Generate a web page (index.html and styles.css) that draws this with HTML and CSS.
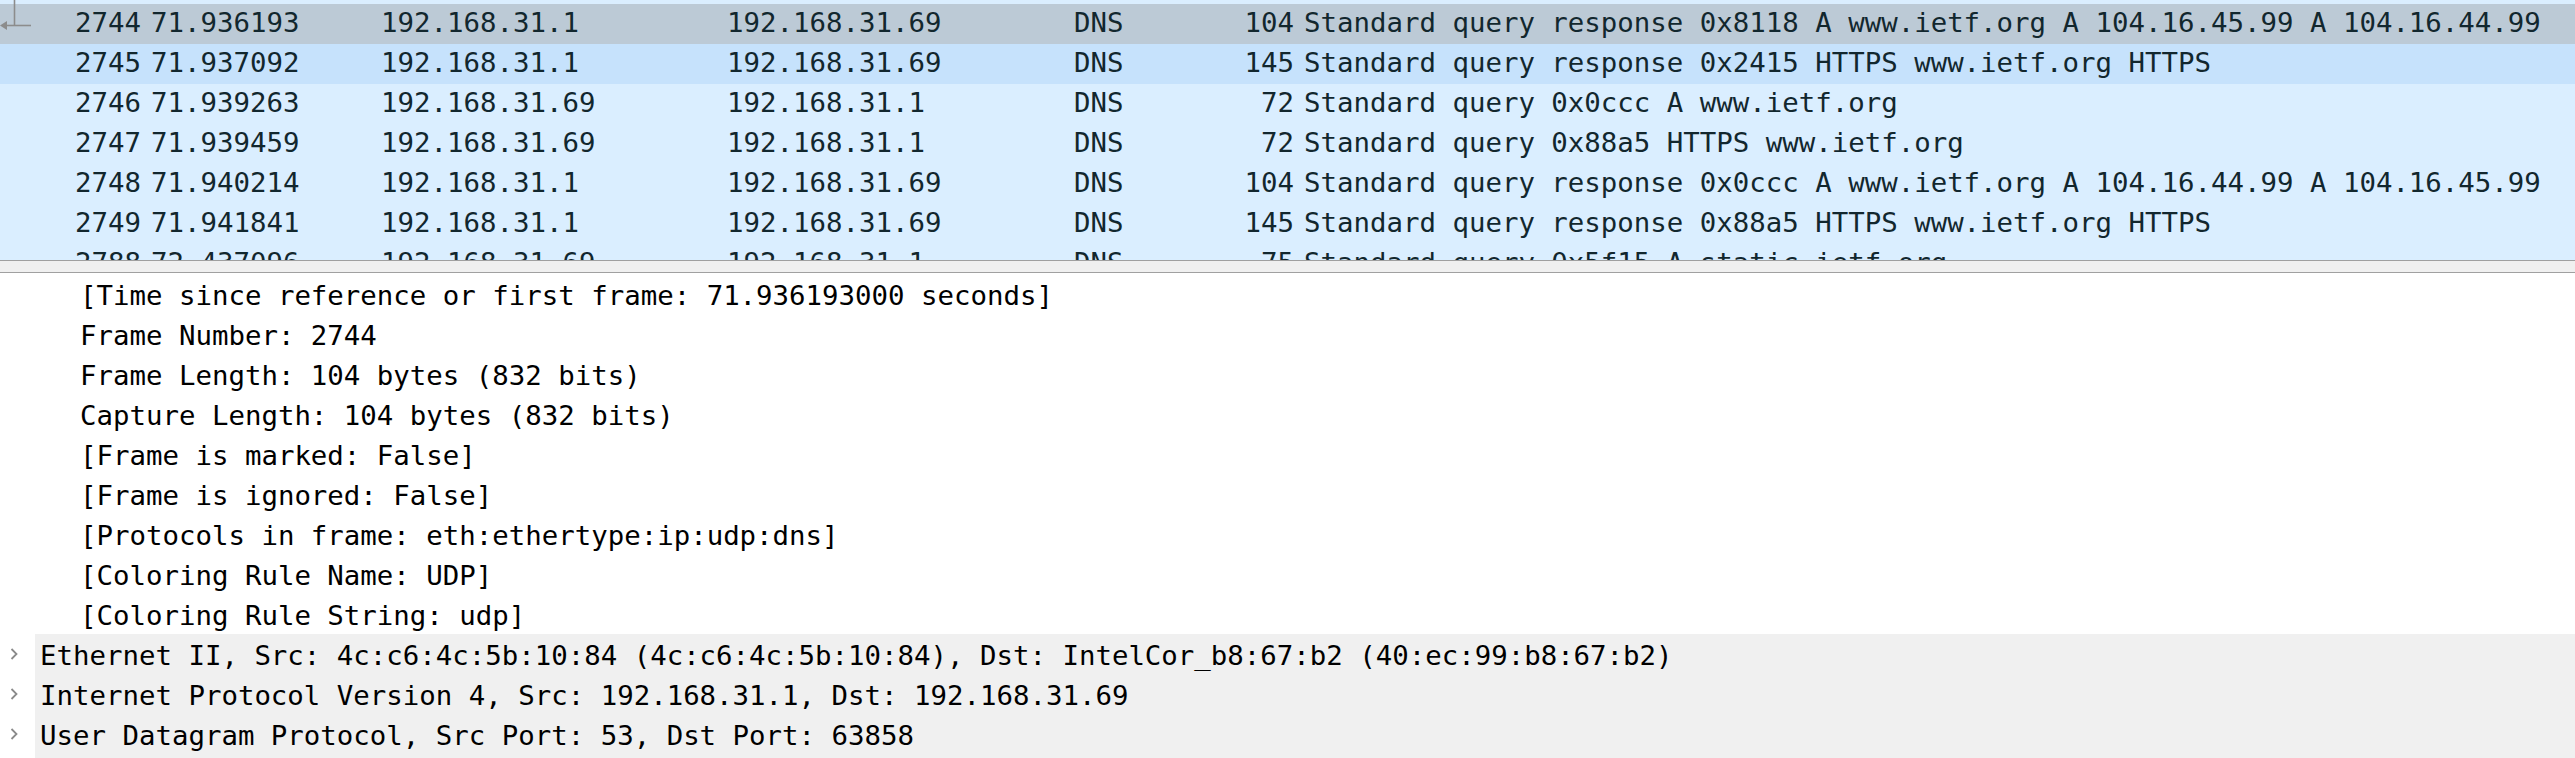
FILE: index.html
```html
<!DOCTYPE html>
<html>
<head>
<meta charset="utf-8">
<link rel="stylesheet" href="styles.css">
</head>
<body>
<div class="app">
  <div class="packet-list">
    <svg class="related" width="34" height="32" viewBox="0 0 34 32">
      <line x1="14.5" y1="0" x2="14.5" y2="25.5" stroke="#8c8c8c" stroke-width="1.6"/>
      <line x1="5" y1="25.5" x2="31" y2="25.5" stroke="#8c8c8c" stroke-width="1.6"/>
      <polygon points="0,25.5 7,21 7,30" fill="#8c8c8c"/>
    </svg>
    <div class="row selected"><span class="c-no">2744</span><span class="c-time">71.936193</span><span class="c-src">192.168.31.1</span><span class="c-dst">192.168.31.69</span><span class="c-proto">DNS</span><span class="c-len">104</span><span class="c-info">Standard query response 0x8118 A www.ietf.org A 104.16.45.99 A 104.16.44.99</span></div>
    <div class="row hover"><span class="c-no">2745</span><span class="c-time">71.937092</span><span class="c-src">192.168.31.1</span><span class="c-dst">192.168.31.69</span><span class="c-proto">DNS</span><span class="c-len">145</span><span class="c-info">Standard query response 0x2415 HTTPS www.ietf.org HTTPS</span></div>
    <div class="row"><span class="c-no">2746</span><span class="c-time">71.939263</span><span class="c-src">192.168.31.69</span><span class="c-dst">192.168.31.1</span><span class="c-proto">DNS</span><span class="c-len">72</span><span class="c-info">Standard query 0x0ccc A www.ietf.org</span></div>
    <div class="row"><span class="c-no">2747</span><span class="c-time">71.939459</span><span class="c-src">192.168.31.69</span><span class="c-dst">192.168.31.1</span><span class="c-proto">DNS</span><span class="c-len">72</span><span class="c-info">Standard query 0x88a5 HTTPS www.ietf.org</span></div>
    <div class="row"><span class="c-no">2748</span><span class="c-time">71.940214</span><span class="c-src">192.168.31.1</span><span class="c-dst">192.168.31.69</span><span class="c-proto">DNS</span><span class="c-len">104</span><span class="c-info">Standard query response 0x0ccc A www.ietf.org A 104.16.44.99 A 104.16.45.99</span></div>
    <div class="row"><span class="c-no">2749</span><span class="c-time">71.941841</span><span class="c-src">192.168.31.1</span><span class="c-dst">192.168.31.69</span><span class="c-proto">DNS</span><span class="c-len">145</span><span class="c-info">Standard query response 0x88a5 HTTPS www.ietf.org HTTPS</span></div>
    <div class="row"><span class="c-no">2788</span><span class="c-time">72.437096</span><span class="c-src">192.168.31.69</span><span class="c-dst">192.168.31.1</span><span class="c-proto">DNS</span><span class="c-len">75</span><span class="c-info">Standard query 0x5f15 A static.ietf.org</span></div>
  </div>
  <div class="splitter"></div>
  <div class="details">
    <div class="drow child">[Time since reference or first frame: 71.936193000 seconds]</div>
    <div class="drow child">Frame Number: 2744</div>
    <div class="drow child">Frame Length: 104 bytes (832 bits)</div>
    <div class="drow child">Capture Length: 104 bytes (832 bits)</div>
    <div class="drow child">[Frame is marked: False]</div>
    <div class="drow child">[Frame is ignored: False]</div>
    <div class="drow child">[Protocols in frame: eth:ethertype:ip:udp:dns]</div>
    <div class="drow child">[Coloring Rule Name: UDP]</div>
    <div class="drow child">[Coloring Rule String: udp]</div>
    <div class="drow top"><span class="twisty"><svg width="10" height="14" viewBox="0 0 10 14"><polyline points="2.5,2 7.5,7 2.5,12" fill="none" stroke="#8a8a8a" stroke-width="1.8"/></svg></span><span class="label">Ethernet II, Src: 4c:c6:4c:5b:10:84 (4c:c6:4c:5b:10:84), Dst: IntelCor_b8:67:b2 (40:ec:99:b8:67:b2)</span></div>
    <div class="drow top"><span class="twisty"><svg width="10" height="14" viewBox="0 0 10 14"><polyline points="2.5,2 7.5,7 2.5,12" fill="none" stroke="#8a8a8a" stroke-width="1.8"/></svg></span><span class="label">Internet Protocol Version 4, Src: 192.168.31.1, Dst: 192.168.31.69</span></div>
    <div class="drow top"><span class="twisty"><svg width="10" height="14" viewBox="0 0 10 14"><polyline points="2.5,2 7.5,7 2.5,12" fill="none" stroke="#8a8a8a" stroke-width="1.8"/></svg></span><span class="label">User Datagram Protocol, Src Port: 53, Dst Port: 63858</span></div>
    <div class="drow top"><span class="twisty"><svg width="10" height="14" viewBox="0 0 10 14"><polyline points="2.5,2 7.5,7 2.5,12" fill="none" stroke="#8a8a8a" stroke-width="1.8"/></svg></span><span class="label">Domain Name System (response)</span></div>
  </div>
</div>
</body>
</html>
```
FILE: styles.css
```css
html, body {
  margin: 0;
  padding: 0;
  background: #ffffff;
  overflow: hidden;
}

.app {
  width: 2575px;
  height: 758px;
  display: flex;
  flex-direction: column;
  font-family: "DejaVu Sans Mono", "Liberation Mono", monospace;
  font-size: 27.4px;
}

.packet-list {
  position: relative;
  height: 260px;
  flex: none;
  box-sizing: border-box;
  padding-top: 4px;
  overflow: hidden;
  background: #daeeff;
  color: #12272e;
}

.related {
  position: absolute;
  left: 0;
  top: 0;
}

.row {
  display: grid;
  grid-template-columns: 146px 230px 346px 347px 130px 100px 1fr;
  height: 40px;
  line-height: 37px;
  white-space: pre;
  background: #daeeff;
}

.row > span {
  overflow: hidden;
  padding: 0 5px;
}

.row.selected {
  background: #bccad6;
}

.row.hover {
  background: #c6e2fc;
}

.c-no, .c-len {
  text-align: right;
}

.splitter {
  flex: none;
  height: 13px;
  box-sizing: border-box;
  border-top: 1px solid #a0a0a0;
  border-bottom: 1px solid #a0a0a0;
  background: #f0f0f0;
}

.details {
  flex: 1;
  overflow: hidden;
  padding-top: 1px;
  color: #000000;
  background: #ffffff;
}

.drow {
  height: 40px;
  box-sizing: border-box;
  white-space: pre;
}

.drow.child {
  padding: 4px 0 0 80px;
  line-height: 36px;
}

.drow.top {
  display: flex;
}

.twisty {
  flex: none;
  width: 35px;
  display: flex;
  align-items: center;
  padding-left: 9px;
  box-sizing: border-box;
}

.twisty svg {
  display: block;
}

.label {
  flex: 1;
  background: #f0f0f0;
  padding: 4px 0 0 5px;
  line-height: 36px;
}
```
